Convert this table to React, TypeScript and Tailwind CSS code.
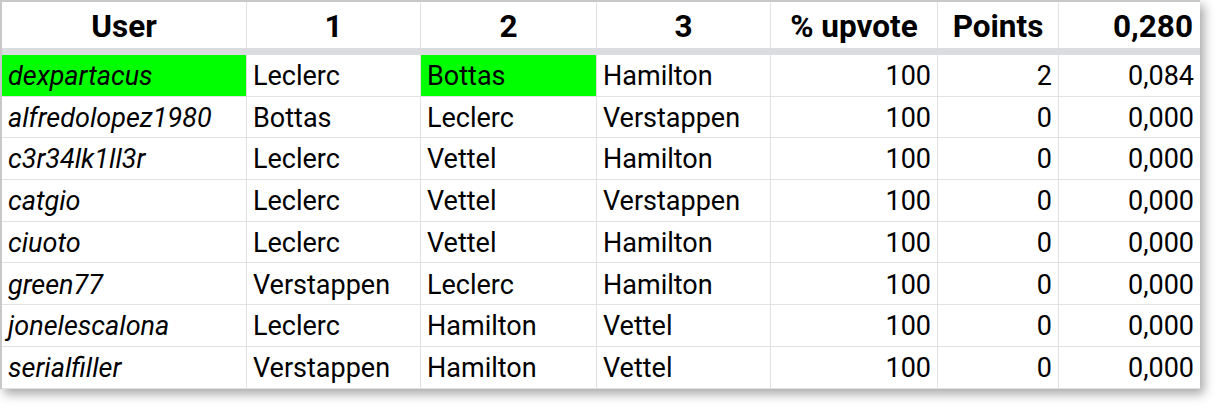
import React from "react";

type Row = {
  user: string;
  p1: string;
  p2: string;
  p3: string;
  upvote: string;
  points: string;
  score: string;
  hitUser?: boolean;
  hitP2?: boolean;
};

const rows: Row[] = [
  { user: "dexpartacus", p1: "Leclerc", p2: "Bottas", p3: "Hamilton", upvote: "100", points: "2", score: "0,084", hitUser: true, hitP2: true },
  { user: "alfredolopez1980", p1: "Bottas", p2: "Leclerc", p3: "Verstappen", upvote: "100", points: "0", score: "0,000" },
  { user: "c3r34lk1ll3r", p1: "Leclerc", p2: "Vettel", p3: "Hamilton", upvote: "100", points: "0", score: "0,000" },
  { user: "catgio", p1: "Leclerc", p2: "Vettel", p3: "Verstappen", upvote: "100", points: "0", score: "0,000" },
  { user: "ciuoto", p1: "Leclerc", p2: "Vettel", p3: "Hamilton", upvote: "100", points: "0", score: "0,000" },
  { user: "green77", p1: "Verstappen", p2: "Leclerc", p3: "Hamilton", upvote: "100", points: "0", score: "0,000" },
  { user: "jonelescalona", p1: "Leclerc", p2: "Hamilton", p3: "Vettel", upvote: "100", points: "0", score: "0,000" },
  { user: "serialfiller", p1: "Verstappen", p2: "Hamilton", p3: "Vettel", upvote: "100", points: "0", score: "0,000" },
];

const cols = "grid grid-cols-[245px_174px_176px_174px_167px_121px_141px]";
const cell = "flex items-center h-[41.7px] px-[6px] pt-[2px] border-r border-b border-[#e2e2e2] whitespace-nowrap";
const head = "flex items-center h-[46px] px-[7px] pt-[3px] border-r border-[#e2e2e2] whitespace-nowrap";

export default function App() {
  return (
    <div className="w-[1220px] h-[410px] bg-white font-['Roboto',sans-serif] text-black">
      <div className="w-[1200px] border-l-2 border-t-2 border-[#c8c8c8] shadow-[4px_5px_10px_rgba(0,0,0,0.35)]">
        {/* header */}
        <div className={`${cols} text-[31.5px] font-bold border-b-[7px] border-[#dadce0]`}>
          <div className={`${head} justify-center`}>User</div>
          <div className={`${head} justify-center`}>1</div>
          <div className={`${head} justify-center`}>2</div>
          <div className={`${head} justify-center`}>3</div>
          <div className={`${head} justify-center`}>% upvote</div>
          <div className={`${head} justify-center`}>Points</div>
          <div className={`${head} justify-end border-r-0`}>0,280</div>
        </div>

        {/* body */}
        <div className={`${cols} text-[27px]`}>
          {rows.map((r) => (
            <React.Fragment key={r.user}>
              <div className={`${cell} italic ${r.hitUser ? "bg-[#00ff00]" : ""}`}>{r.user}</div>
              <div className={cell}>{r.p1}</div>
              <div className={`${cell} ${r.hitP2 ? "bg-[#00ff00]" : ""}`}>{r.p2}</div>
              <div className={cell}>{r.p3}</div>
              <div className={`${cell} justify-end`}>{r.upvote}</div>
              <div className={`${cell} justify-end`}>{r.points}</div>
              <div className={`${cell} justify-end border-r-0`}>{r.score}</div>
            </React.Fragment>
          ))}
        </div>
      </div>
    </div>
  );
}
